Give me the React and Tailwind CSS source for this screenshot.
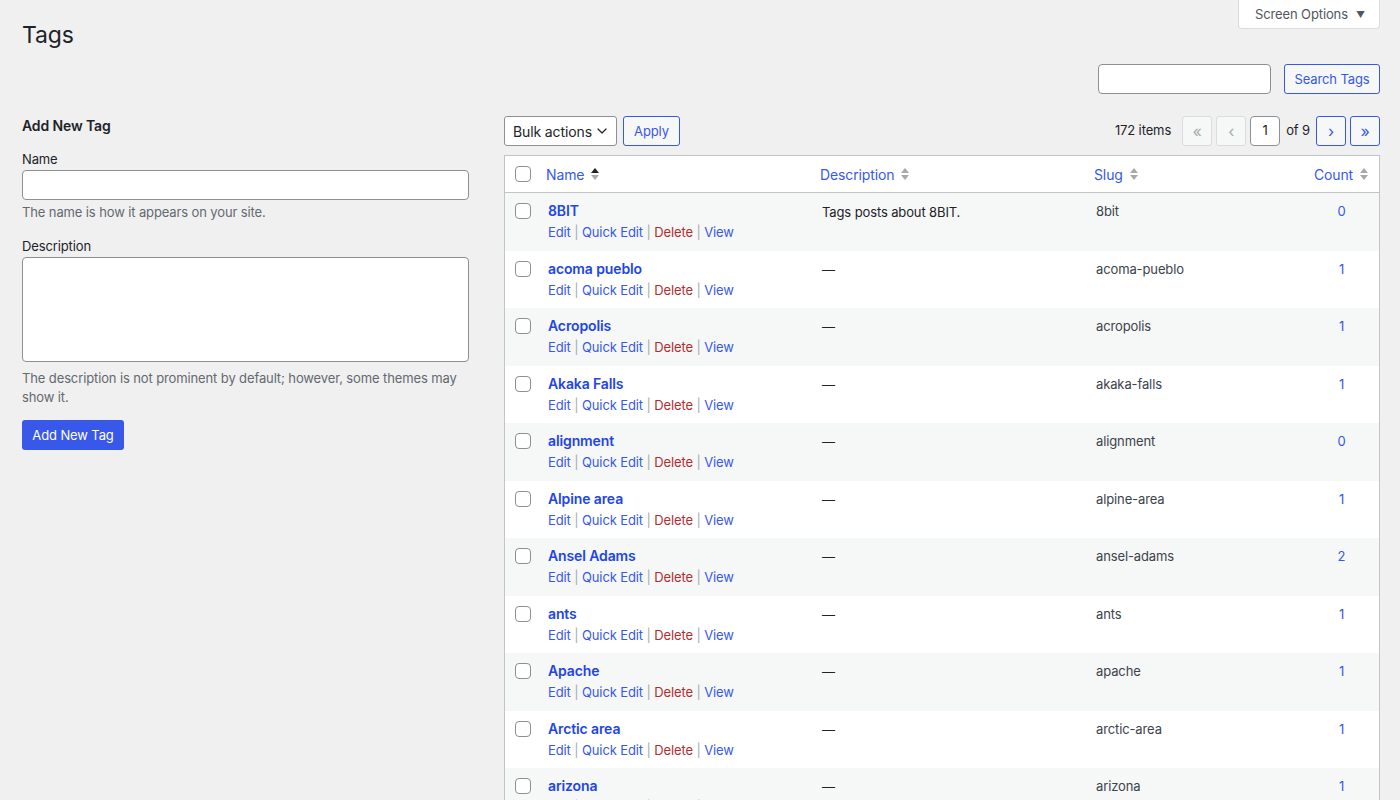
import { ChevronDown } from 'lucide-react';

const tags = [
  { name: '8BIT', desc: 'Tags posts about 8BIT.', slug: '8bit', count: 0 },
  { name: 'acoma pueblo', desc: '—', slug: 'acoma-pueblo', count: 1 },
  { name: 'Acropolis', desc: '—', slug: 'acropolis', count: 1 },
  { name: 'Akaka Falls', desc: '—', slug: 'akaka-falls', count: 1 },
  { name: 'alignment', desc: '—', slug: 'alignment', count: 0 },
  { name: 'Alpine area', desc: '—', slug: 'alpine-area', count: 1 },
  { name: 'Ansel Adams', desc: '—', slug: 'ansel-adams', count: 2 },
  { name: 'ants', desc: '—', slug: 'ants', count: 1 },
  { name: 'Apache', desc: '—', slug: 'apache', count: 1 },
  { name: 'Arctic area', desc: '—', slug: 'arctic-area', count: 1 },
  { name: 'arizona', desc: '—', slug: 'arizona', count: 1 },
];

function SortIcon({ active }) {
  return (
    <svg width="10" height="14" viewBox="0 0 10 14" className="shrink-0">
      <path d="M5 1 L9 6 L1 6 Z" fill={active ? '#1d2327' : '#a7aaad'} />
      <path d="M5 13 L9 8 L1 8 Z" fill="#a7aaad" />
    </svg>
  );
}

function Checkbox() {
  return <span className="block w-4 h-4 rounded-[4px] border border-[#8c8f94] bg-white" />;
}

function PageBtn({ children, disabled }) {
  return disabled ? (
    <span className="w-[30px] h-[30px] flex items-center justify-center rounded-[3px] border border-[#dcdcde] bg-[#f6f7f7] text-[#a7aaad] text-[16px]">
      {children}
    </span>
  ) : (
    <span className="w-[30px] h-[30px] flex items-center justify-center rounded-[3px] border border-[#3858e9] bg-[#f6f7f7] text-[#3858e9] text-[16px]">
      {children}
    </span>
  );
}

export default function App() {
  return (
    <div
      className="h-[800px] overflow-hidden bg-[#f0f0f1] text-[#1d2327] text-[13px] tracking-[-0.12px] pl-[22px] pr-[20px]"
      style={{ fontFamily: 'Inter, "Liberation Sans", sans-serif' }}
    >
      <div className="flex justify-between items-start">
        <h1 className="mt-[20px] text-[23px] leading-[30px] font-normal">Tags</h1>
        <div className="w-[142px] h-[29px] pt-[2px] bg-white border border-t-0 border-[#dcdcde] rounded-b-[4px] flex items-center pl-[16px] gap-[8px] text-[#50575e] text-[13px]">
          <span>Screen Options</span>
          <span className="text-[9px]">▼</span>
        </div>
      </div>

      <div className="flex justify-end mt-[14px] gap-[13px]">
        <div className="w-[173px] h-[30px] bg-white border border-[#8c8f94] rounded-[4px]" />
        <div className="w-[96px] h-[30px] pt-[1px] flex items-center justify-center rounded-[3px] border border-[#3858e9] bg-[#f6f7f7] text-[#3858e9]">
          Search Tags
        </div>
      </div>

      <div className="flex mt-[22px] gap-[35px]">
        <div className="w-[447px] shrink-0">
          <h2 className="text-[14px] leading-5 font-semibold">Add New Tag</h2>
          <div className="mt-[14px] leading-[18px]">Name</div>
          <div className="mt-[2px] h-[30px] bg-white border border-[#8c8f94] rounded-[4px]" />
          <p className="mt-[3px] leading-[18px] text-[#646970]">The name is how it appears on your site.</p>
          <div className="mt-[16px] leading-[18px]">Description</div>
          <div className="mt-[2px] h-[105px] bg-white border border-[#8c8f94] rounded-[4px]" />
          <p className="mt-[7px] leading-[19px] text-[#646970]">
            The description is not prominent by default; however, some themes may show it.
          </p>
          <div className="mt-[13px] w-[102px] h-[30px] pt-[1px] flex items-center justify-center rounded-[3px] bg-[#3858e9] text-white">
            Add New Tag
          </div>
        </div>

        <div className="flex-1">
          <div className="flex items-center justify-between">
            <div className="flex items-center gap-[6px]">
              <div className="w-[113px] h-[30px] bg-white border border-[#8c8f94] rounded-[3px] flex items-center justify-between pl-[8px] pr-[6px] text-[14px]">
                <span>Bulk actions</span>
                <ChevronDown size={16} strokeWidth={1.8} />
              </div>
              <div className="w-[57px] h-[30px] pt-[1px] flex items-center justify-center rounded-[3px] border border-[#3858e9] bg-[#f6f7f7] text-[#3858e9]">
                Apply
              </div>
            </div>
            <div className="flex items-center">
              <span className="mr-[11px]">172 items</span>
              <div className="flex items-center gap-[4px]">
                <PageBtn disabled>«</PageBtn>
                <PageBtn disabled>‹</PageBtn>
                <span className="w-[30px] h-[30px] flex items-center justify-center rounded-[4px] border border-[#8c8f94] bg-white text-[13px]">1</span>
                <span className="mx-[2px]">of 9</span>
                <PageBtn>›</PageBtn>
                <PageBtn>»</PageBtn>
              </div>
            </div>
          </div>

          <div className="mt-[9px] bg-white border border-[#c3c4c7]">
            <div className="grid grid-cols-[33px_274px_274px_218px_1fr] h-[37px] border-b border-[#c3c4c7] items-center text-[14px] text-[#3858e9]">
              <div className="pl-[10px]"><Checkbox /></div>
              <div className="pl-[8px] flex items-center gap-[6px]">Name <SortIcon active /></div>
              <div className="pl-[8px] flex items-center gap-[6px]">Description <SortIcon /></div>
              <div className="pl-[8px] flex items-center gap-[6px]">Slug <SortIcon /></div>
              <div className="flex items-center justify-center gap-[6px]">Count <SortIcon /></div>
            </div>
            {tags.map((t, i) => (
              <div
                key={t.slug}
                className={`grid grid-cols-[33px_274px_274px_218px_1fr] h-[57.5px] pt-[8px] ${i % 2 === 0 ? 'bg-[#f6f7f7]' : 'bg-white'}`}
              >
                <div className="pl-[10px] pt-[2px]"><Checkbox /></div>
                <div className="pl-[10px]">
                  <div className="text-[14px] leading-5 font-semibold text-[#2145e6]">{t.name}</div>
                  <div className="mt-[1px] leading-5 text-[#3858e9]">
                    Edit <span className="text-[#a7aaad]">|</span> Quick Edit <span className="text-[#a7aaad]">|</span>{' '}
                    <span className="text-[#b32d2e]">Delete</span> <span className="text-[#a7aaad]">|</span> View
                  </div>
                </div>
                <div className="pl-[10px] leading-5 pt-[1px]">{t.desc}</div>
                <div className="pl-[10px] leading-5 text-[#3c434a]">{t.slug}</div>
                <div className="text-center leading-5 text-[#3858e9]">{t.count}</div>
              </div>
            ))}
          </div>
        </div>
      </div>
    </div>
  );
}
